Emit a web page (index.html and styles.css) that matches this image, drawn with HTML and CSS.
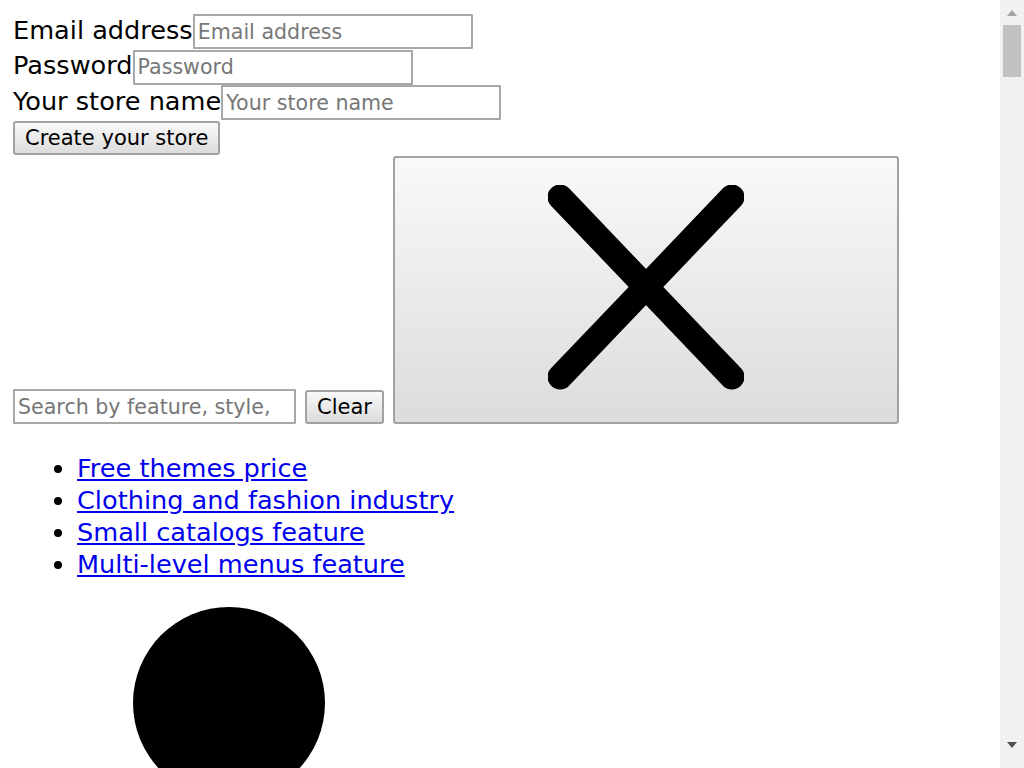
FILE: index.html
```html
<!DOCTYPE html>
<html lang="en">
<head>
    <meta charset="UTF-8">
    <meta name="viewport" content="width=device-width, initial-scale=1.0">
    <title>Create your store</title>
    <link rel="stylesheet" href="styles.css">
</head>
<body>
    <form class="signup">
        <div class="field"><label for="email">Email address</label><input type="email" id="email" class="text-input" placeholder="Email address"></div>
        <div class="field"><label for="password">Password</label><input type="password" id="password" class="text-input" placeholder="Password"></div>
        <div class="field"><label for="store">Your store name</label><input type="text" id="store" class="text-input" placeholder="Your store name"></div>
        <button type="submit" class="btn">Create your store</button>
    </form>

    <div class="search">
        <input type="text" class="text-input search-input" placeholder="Search by feature, style, industry">
        <button type="button" class="btn">Clear</button>
        <button type="button" class="btn close-btn" aria-label="Close">
            <svg width="196" height="210" viewBox="0 0 196 210">
                <line x1="12" y1="12" x2="184" y2="192" stroke="#000" stroke-width="25" stroke-linecap="round"/>
                <line x1="184" y1="12" x2="12" y2="192" stroke="#000" stroke-width="25" stroke-linecap="round"/>
            </svg>
        </button>
    </div>

    <ul class="tags">
        <li><a href="#">Free themes price</a></li>
        <li><a href="#">Clothing and fashion industry</a></li>
        <li><a href="#">Small catalogs feature</a></li>
        <li><a href="#">Multi-level menus feature</a></li>
    </ul>

    <div class="avatar"></div>

    <div class="scrollbar" aria-hidden="true">
        <span class="arrow up"></span>
        <span class="thumb"></span>
        <span class="arrow down"></span>
    </div>
</body>
</html>
```

FILE: styles.css
```css
body {
    margin: 0;
    padding: 14px 13px 0;
    font-family: "DejaVu Sans", Verdana, sans-serif;
    font-size: 25.6px;
    color: #000;
    background-color: #fff;
}

.field {
    display: flex;
    align-items: baseline;
    height: 35.5px;
}

.text-input {
    box-sizing: border-box;
    width: 280px;
    height: 35px;
    margin: 0;
    padding: 0 3px;
    border: 2px solid #a8a8a8;
    border-radius: 1px;
    font-family: "DejaVu Sans", Verdana, sans-serif;
    font-size: 20.6px;
    color: #000;
    background-color: #fff;
    outline: none;
}

.text-input::placeholder {
    color: #777;
}

.btn {
    height: 34.5px;
    margin: 0;
    padding: 0 10px;
    border: 2px solid #a2a2a2;
    border-radius: 3px;
    font-family: "DejaVu Sans", Verdana, sans-serif;
    font-size: 21px;
    color: #000;
    background: linear-gradient(#f9f9f9, #dcdcdc);
}

.search {
    display: flex;
    align-items: flex-end;
    gap: 9px;
    margin-top: 1px;
}

.search-input {
    width: 283px;
    padding-right: 20px;
}

.close-btn {
    width: 506px;
    height: 268px;
    padding: 0;
    display: flex;
    align-items: center;
    justify-content: center;
}

.close-btn svg {
    display: block;
}

.tags {
    margin: 28px 0 27px;
    padding-left: 64px;
    line-height: 32px;
}

.tags a {
    color: #0000ee;
}

.avatar {
    width: 192px;
    height: 192px;
    margin-left: 120px;
    border-radius: 50%;
    background-color: #000;
}

.scrollbar {
    position: fixed;
    top: 0;
    right: 0;
    width: 24px;
    height: 100%;
    display: flex;
    flex-direction: column;
    align-items: center;
    background-color: #f1f1f1;
}

.arrow {
    width: 0;
    height: 0;
    border-left: 5px solid transparent;
    border-right: 5px solid transparent;
}

.arrow.up {
    margin-top: 10px;
    border-bottom: 6px solid #a3a3a3;
}

.arrow.down {
    margin-top: auto;
    margin-bottom: 20px;
    border-top: 6px solid #505050;
}

.thumb {
    width: 18px;
    height: 52px;
    margin-top: 9px;
    background-color: #c1c1c1;
}
```
